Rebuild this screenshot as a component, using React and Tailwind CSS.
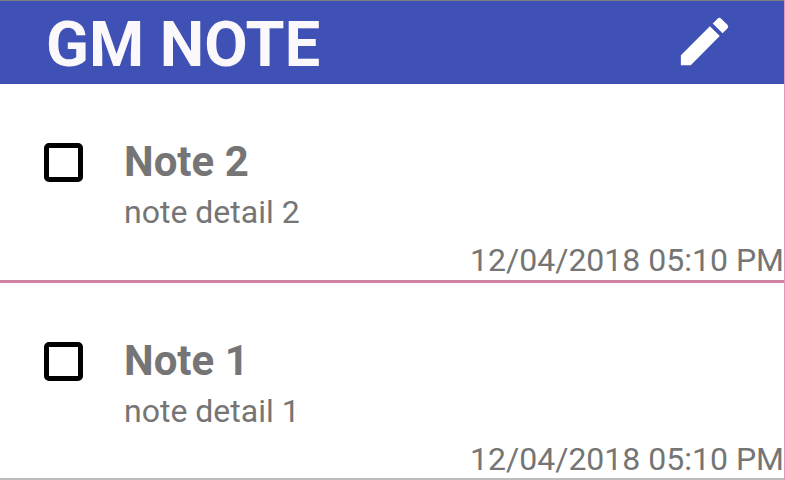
const notes = [
  { id: 2, title: "Note 2", detail: "note detail 2", date: "12/04/2018 05:10 PM" },
  { id: 1, title: "Note 1", detail: "note detail 1", date: "12/04/2018 05:10 PM" },
];

function Note({ note }) {
  return (
    <li className="flex flex-col border-b-3 border-[#d080a5] pt-14 pb-px last:border-b-2 last:border-[#bdbdbd] last:pb-0">
      <div className="flex gap-[41px] pl-11">
        <input
          id={`note-${note.id}`}
          type="checkbox"
          className="mt-[3px] size-[39px] shrink-0 appearance-none rounded-[5px] border-5 border-black checked:bg-black"
        />
        <div>
          <label htmlFor={`note-${note.id}`} className="block text-[42px] leading-[44px] font-bold">
            {note.title}
          </label>
          <p className="mt-2 text-[32px] leading-10">{note.detail}</p>
        </div>
      </div>
      <time className="mt-[9px] self-end text-[32px] leading-[38px]">{note.date}</time>
    </li>
  );
}

export default function App() {
  return (
    <div className="border-r border-[#ec94bd] bg-white font-['Roboto',sans-serif] text-[#757575]">
      <header className="flex items-center justify-between border-t border-[#808080] bg-[#3f51b5] pr-12 pl-[46px]">
        <h1 className="pt-1 text-[63px] leading-[79px] font-bold text-[#faf8fa]">GM NOTE</h1>
        <button type="button" aria-label="New note" className="pb-0.5 text-white">
          <svg viewBox="0 0 24 24" className="size-[63px]" fill="currentColor">
            <path d="M3 17.25V21h3.75L17.81 9.94l-3.75-3.75L3 17.25zM20.71 7.04a.996.996 0 0 0 0-1.41l-2.34-2.34a.996.996 0 0 0-1.41 0l-1.83 1.83 3.75 3.75 1.83-1.83z" />
          </svg>
        </button>
      </header>
      <ul>
        {notes.map((note) => (
          <Note key={note.id} note={note} />
        ))}
      </ul>
    </div>
  );
}
